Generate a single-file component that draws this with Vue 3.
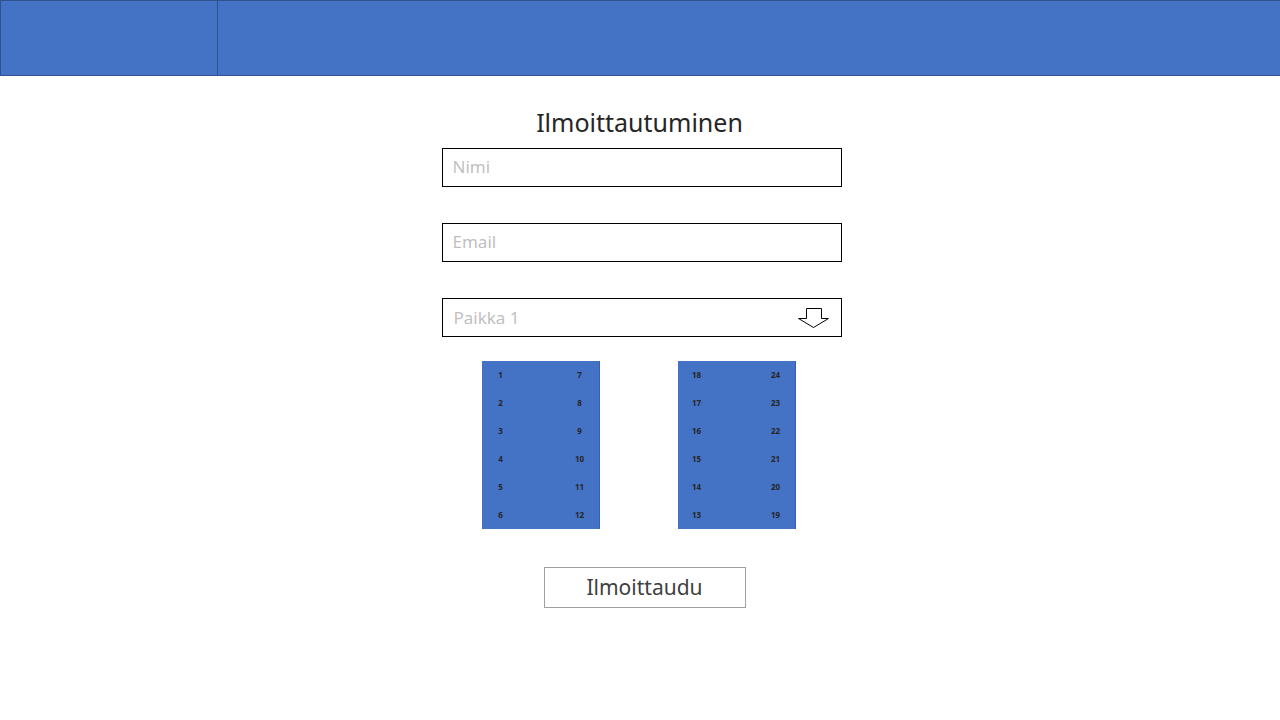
<script setup>
import { ref } from 'vue'

const name = ref('')
const email = ref('')
const seat = ref(1)
const seats = Array.from({ length: 24 }, (_, i) => i + 1)

const tables = [
  { id: 'left', rows: [[1, 7], [2, 8], [3, 9], [4, 10], [5, 11], [6, 12]] },
  { id: 'right', rows: [[18, 24], [17, 23], [16, 22], [15, 21], [14, 20], [13, 19]] },
]
</script>

<template>
  <div class="page">
    <header class="topbar">
      <div class="brand"></div>
      <div class="bar"></div>
    </header>
    <main class="content">
      <form class="form" @submit.prevent>
        <h1 class="title">Ilmoittautuminen</h1>
        <input v-model="name" class="field" type="text" placeholder="Nimi" aria-label="Nimi" />
        <input v-model="email" class="field" type="email" placeholder="Email" aria-label="Email" />
        <div class="select-wrap">
          <select v-model="seat" class="field select" aria-label="Paikka">
            <option v-for="n in seats" :key="n" :value="n">Paikka {{ n }}</option>
          </select>
          <svg class="arrow" width="32" height="21" viewBox="0 0 32 21" aria-hidden="true">
            <path d="M8.5 .5H23.5V10.5H30.5L15.5 19.5L.5 10.5H8.5Z" fill="#fff" stroke="#000" />
          </svg>
        </div>
        <div class="tables">
          <div v-for="table in tables" :key="table.id" class="seat-table">
            <div v-for="row in table.rows" :key="row[0]" class="seat-row">
              <span v-for="n in row" :key="n" class="seat">{{ n }}</span>
            </div>
          </div>
        </div>
        <button class="submit" type="submit">Ilmoittaudu</button>
      </form>
    </main>
  </div>
</template>

<style>
body {
  background: #fff;
}
</style>

<style scoped>
.page,
.page * {
  box-sizing: border-box;
}
.page {
  font-family: "Noto Sans", "Open Sans", sans-serif;
}
.topbar {
  display: flex;
  height: 76px;
  background: #4472c4;
  border: 1px solid #2f528f;
  border-right: 0;
}
.brand {
  flex: 0 0 217px;
  border-right: 1px solid #2f528f;
}
.bar {
  flex: 1;
}
.content {
  padding: 30px 0 40px 3px;
}
.form {
  display: flex;
  flex-direction: column;
  max-width: 400px;
  margin: 0 auto;
}
.title {
  margin: 0 0 10px;
  padding-right: 4px;
  font-size: 25px;
  line-height: 32px;
  font-weight: 400;
  text-align: center;
  color: #262626;
}
.field {
  display: block;
  width: 100%;
  height: 39px;
  margin: 0 0 36px;
  padding: 0 10px 2px;
  border: 1px solid #000;
  border-radius: 0;
  background: #fff;
  font-family: inherit;
  font-size: 17px;
  color: #262626;
}
.field::placeholder {
  color: #bfbfbf;
  opacity: 1;
}
.select-wrap {
  position: relative;
}
.select {
  appearance: none;
  margin: 0;
  padding: 0 48px 0 11px;
  color: #bfbfbf;
}
.arrow {
  position: absolute;
  top: 10px;
  right: 12px;
  pointer-events: none;
}
.tables {
  display: flex;
  justify-content: space-between;
  padding: 24px 46px 0 40px;
}
.seat-table {
  width: 118px;
  background: #4472c4;
  border-right: 1px solid #3561b5;
}
.seat-row {
  display: flex;
  justify-content: space-between;
}
.seat {
  width: 38px;
  text-align: center;
  font-size: 8px;
  line-height: 28px;
  font-weight: 700;
  color: #262626;
}
.submit {
  align-self: center;
  width: 202px;
  height: 41px;
  margin: 38px 0 0 6px;
  padding: 0 0 2px;
  border: 1px solid #a0a0a0;
  background: #fff;
  font-family: inherit;
  font-size: 21px;
  color: #404040;
}
</style>
